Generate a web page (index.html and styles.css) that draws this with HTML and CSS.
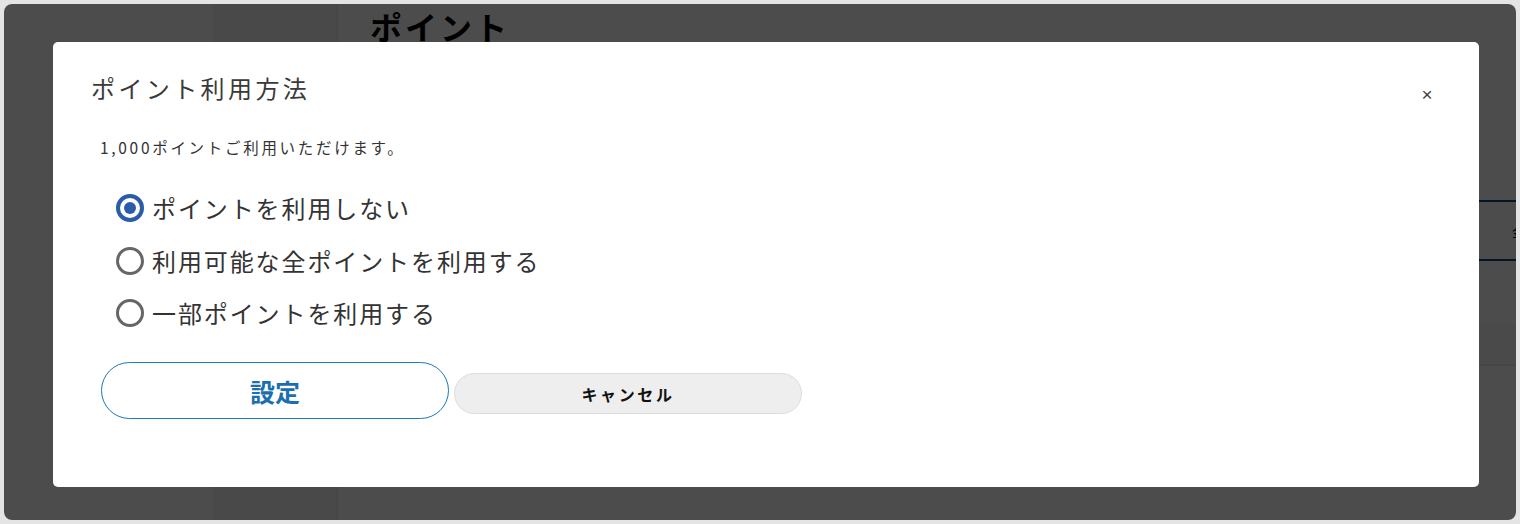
FILE: index.html
```html
<!DOCTYPE html>
<html lang="ja">
<head>
<meta charset="utf-8">
<title>ポイント利用方法</title>
<link rel="stylesheet" href="styles.css">
</head>
<body>
<div class="screen">
  <div class="page">
    <div class="gutter"></div>
    <aside class="sidebar"></aside>
    <main class="main">
      <h1 class="page-title">ポイント</h1>
      <div class="table">
        <div class="table-row"><span class="cell-end">金額</span></div>
        <div class="table-band"></div>
      </div>
    </main>
  </div>
  <div class="overlay"></div>
  <div class="modal" role="dialog">
    <h2 class="modal-title">ポイント利用方法</h2>
    <button class="close" aria-label="閉じる">×</button>
    <p class="note">1,000ポイントご利用いただけます。</p>
    <div class="options">
      <label class="option"><span class="radio checked"></span><span class="opt-text">ポイントを利用しない</span></label>
      <label class="option"><span class="radio"></span><span class="opt-text">利用可能な全ポイントを利用する</span></label>
      <label class="option"><span class="radio"></span><span class="opt-text">一部ポイントを利用する</span></label>
    </div>
    <div class="actions">
      <button class="btn btn-primary">設定</button>
      <button class="btn btn-cancel">キャンセル</button>
    </div>
  </div>
</div>
</body>
</html>
```
FILE: styles.css
```css
html, body {
  margin: 0;
  padding: 0;
}
body {
  background: #e4e4e4;
  font-family: "Noto Sans CJK JP", "Noto Sans", sans-serif;
  width: 1520px;
  height: 524px;
  overflow: hidden;
}
.screen {
  margin: 4px;
  width: 1512px;
  height: 516px;
  border-radius: 8px;
  overflow: hidden;
  position: relative;
  background: #ffffff;
}
.page {
  display: flex;
  height: 100%;
}
.gutter {
  width: 209px;
  background: #ffffff;
}
.sidebar {
  width: 124px;
  background: #f6f6f6;
  border-right: 1px solid #e6e6e6;
}
.main {
  flex: 1;
  padding-left: 32px;
}
.page-title {
  margin: 0;
  font-size: 32px;
  font-weight: 700;
  line-height: 44px;
  letter-spacing: 3px;
  color: #000;
}
.table {
  margin-top: 152px;
}
.table-row {
  height: 57px;
  border-top: 2px solid #0c4a84;
  border-bottom: 2px solid #0c4a84;
  display: flex;
  justify-content: flex-end;
  align-items: center;
}
.cell-end {
  font-size: 14px;
  color: #000;
  width: 4px;
  overflow: hidden;
  white-space: nowrap;
}
.table-band {
  margin-top: 63px;
  height: 40px;
  background: #f8f8f8;
  border-bottom: 2px solid #ececec;
}
.overlay {
  position: absolute;
  inset: 0;
  background: rgba(0, 0, 0, 0.7);
}
.modal {
  position: absolute;
  left: 49px;
  top: 38px;
  width: 1426px;
  height: 445px;
  box-sizing: border-box;
  background: #ffffff;
  border-radius: 5px;
  padding: 27px 38px 0 38px;
  color: #333;
}
.modal-title {
  margin: 0;
  font-size: 24px;
  font-weight: 400;
  line-height: 38px;
  letter-spacing: 3.4px;
  color: #3a3a3a;
}
.close {
  position: absolute;
  right: 44px;
  top: 41px;
  border: 0;
  background: none;
  font-family: "Liberation Sans", sans-serif;
  font-size: 19px;
  line-height: 24px;
  width: 16px;
  padding: 0;
  color: #444;
}
.note {
  margin: 30px 0 0 9px;
  font-size: 15.5px;
  line-height: 20px;
  letter-spacing: 2.7px;
  color: #333;
}
.options {
  margin-top: 33px;
  margin-left: 25px;
  display: flex;
  flex-direction: column;
  gap: 16.5px;
}
.option {
  display: flex;
  align-items: center;
  gap: 8px;
  height: 36px;
}
.radio {
  width: 22px;
  height: 22px;
  border: 3px solid #666;
  border-radius: 50%;
  box-sizing: content-box;
  position: relative;
  flex: none;
}
.radio.checked {
  width: 20px;
  height: 20px;
  border: 4px solid #2a5caa;
}
.radio.checked::after {
  content: "";
  position: absolute;
  left: 4px;
  top: 4px;
  width: 12px;
  height: 12px;
  border-radius: 50%;
  background: #2a5caa;
}
.opt-text {
  font-size: 24px;
  line-height: 36px;
  color: #333;
  letter-spacing: 1.9px;
}
.actions {
  margin-top: 31px;
  margin-left: 10px;
  display: flex;
  align-items: flex-start;
  gap: 5px;
}
.btn {
  font-family: "Noto Sans CJK JP", "Noto Sans", sans-serif;
  border-radius: 30px;
  width: 348px;
  cursor: pointer;
  padding: 0;
}
.btn-primary {
  height: 57px;
  background: #fff;
  border: 1px solid #1b79bd;
  color: #1b6fb0;
  font-size: 25px;
  font-weight: 700;
}
.btn-cancel {
  margin-top: 11px;
  height: 41px;
  background: #eeeeee;
  border: 1px solid #dcdcdc;
  color: #111;
  font-size: 16px;
  font-weight: 700;
  letter-spacing: 2.6px;
}
```
